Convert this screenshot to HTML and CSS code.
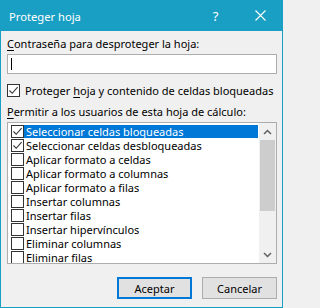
FILE: index.html
```html
<!DOCTYPE html>
<html lang="es">
<head>
<meta charset="utf-8">
<title>Proteger hoja</title>
<link rel="stylesheet" href="styles.css">
</head>
<body>
<div class="window">
  <div class="titlebar">
    <span class="title">Proteger hoja</span>
    <span class="tbtn help">?</span>
    <span class="tbtn close"><svg width="11" height="11" viewBox="0 0 11 11"><path d="M0.5 0.5 L10.5 10.5 M10.5 0.5 L0.5 10.5" stroke="#fff" stroke-width="1.1" fill="none"/></svg></span>
  </div>
  <div class="content">
    <div class="label"><u>C</u>ontraseña para desproteger la hoja:</div>
    <div class="input"><span class="caret"></span></div>
    <div class="check-row">
      <span class="cb"><svg width="11" height="11" viewBox="0 0 11 11"><path d="M1.5 5.5 L4.2 8.3 L9.6 2.2" stroke="#333" stroke-width="1.1" fill="none"/></svg></span>
      <span class="check-label">Proteger <u>h</u>oja y contenido de celdas bloqueadas</span>
    </div>
    <div class="label label2"><u>P</u>ermitir a los usuarios de esta hoja de cálculo:</div>
    <div class="listbox">
      <div class="items">
        <div class="item selected"><span class="cb"><svg width="11" height="11" viewBox="0 0 11 11"><path d="M1.5 5.5 L4.2 8.3 L9.6 2.2" stroke="#333" stroke-width="1.1" fill="none"/></svg></span><span class="text">Seleccionar celdas bloqueadas</span></div>
        <div class="item"><span class="cb"><svg width="11" height="11" viewBox="0 0 11 11"><path d="M1.5 5.5 L4.2 8.3 L9.6 2.2" stroke="#333" stroke-width="1.1" fill="none"/></svg></span><span class="text">Seleccionar celdas desbloqueadas</span></div>
        <div class="item"><span class="cb"></span><span class="text">Aplicar formato a celdas</span></div>
        <div class="item"><span class="cb"></span><span class="text">Aplicar formato a columnas</span></div>
        <div class="item"><span class="cb"></span><span class="text">Aplicar formato a filas</span></div>
        <div class="item"><span class="cb"></span><span class="text">Insertar columnas</span></div>
        <div class="item"><span class="cb"></span><span class="text">Insertar filas</span></div>
        <div class="item"><span class="cb"></span><span class="text">Insertar hipervínculos</span></div>
        <div class="item"><span class="cb"></span><span class="text">Eliminar columnas</span></div>
        <div class="item"><span class="cb"></span><span class="text">Eliminar filas</span></div>
      </div>
      <div class="scrollbar">
        <div class="arrow"><svg width="9" height="6" viewBox="0 0 9 6"><path d="M1 5 L4.5 1.5 L8 5" stroke="#606060" stroke-width="1.5" fill="none"/></svg></div>
        <div class="track"><div class="thumb"></div></div>
        <div class="arrow"><svg width="9" height="6" viewBox="0 0 9 6"><path d="M1 1 L4.5 4.5 L8 1" stroke="#606060" stroke-width="1.5" fill="none"/></svg></div>
      </div>
    </div>
    <div class="buttons">
      <div class="btn default">Aceptar</div>
      <div class="btn">Cancelar</div>
    </div>
  </div>
</div>
</body>
</html>
```

FILE: styles.css
```css
html, body {
  margin: 0;
  padding: 0;
  background: #f0f0f0;
}
.window {
  width: 283px;
  height: 308px;
  box-sizing: border-box;
  border: 1px solid #1a9fc4;
  border-top: 0;
  background: #f0f0f0;
  font-family: "Noto Sans", "Open Sans", sans-serif;
  font-size: 11px;
  color: #000;
  overflow: hidden;
}
.titlebar {
  height: 31px;
  margin: 0 -1px;
  background: #1a9fc4;
  color: #fff;
  display: flex;
  align-items: center;
}
.title {
  flex: 1;
  padding-left: 9px;
  font-size: 11.2px;
  padding-top: 1px;
}
.tbtn {
  width: 45px;
  height: 31px;
  display: flex;
  align-items: center;
  justify-content: center;
}
.help {
  font-size: 13px;
}
.content {
  padding: 0 5px 0 6px;
}
.label {
  margin-top: 6px;
  height: 14px;
  line-height: 14px;
}
.label u, .check-row u {
  text-decoration-thickness: 1px;
  text-underline-offset: 2px;
}
.input {
  margin-top: 3px;
  height: 20px;
  box-sizing: border-box;
  border: 1px solid #adadad;
  background: #fff;
  display: flex;
  align-items: center;
  padding-left: 3px;
}
.caret {
  width: 1px;
  height: 12px;
  background: #000;
}
.check-row {
  margin-top: 9px;
  height: 15px;
  display: flex;
  align-items: center;
  gap: 5px;
}
.check-label {
  white-space: nowrap;
}
.cb {
  width: 13px;
  height: 13px;
  box-sizing: border-box;
  border: 1px solid #333;
  background: #fff;
  display: flex;
  align-items: center;
  justify-content: center;
  flex: none;
}
.label2 {
  margin-top: 7px;
}
.listbox {
  margin-top: 3px;
  height: 142px;
  box-sizing: border-box;
  border: 1px solid #adadad;
  background: #fff;
  display: flex;
  overflow: hidden;
}
.items {
  flex: 1;
  padding-top: 1px;
  overflow: hidden;
}
.item {
  height: 14px;
  display: flex;
  align-items: center;
  padding-left: 3px;
}
.item .text {
  flex: 1;
  height: 13px;
  line-height: 13px;
  padding-left: 2px;
  margin-right: 1px;
}
.item.selected .text {
  background: #0078d7;
  color: #fff;
}
.scrollbar {
  width: 17px;
  background: #f0f0f0;
  display: flex;
  flex-direction: column;
}
.arrow {
  height: 17px;
  display: flex;
  align-items: center;
  justify-content: center;
}
.track {
  flex: 1;
  padding: 0 1px;
}
.thumb {
  height: 71px;
  background: #cdcdcd;
}
.buttons {
  margin-top: 13px;
  display: flex;
  justify-content: flex-end;
  gap: 10px;
}
.btn {
  width: 75px;
  height: 22px;
  box-sizing: border-box;
  border: 1px solid #adadad;
  background: #e1e1e1;
  display: flex;
  align-items: center;
  justify-content: center;
}
.btn.default {
  border: 2px solid #0078d7;
}
```
